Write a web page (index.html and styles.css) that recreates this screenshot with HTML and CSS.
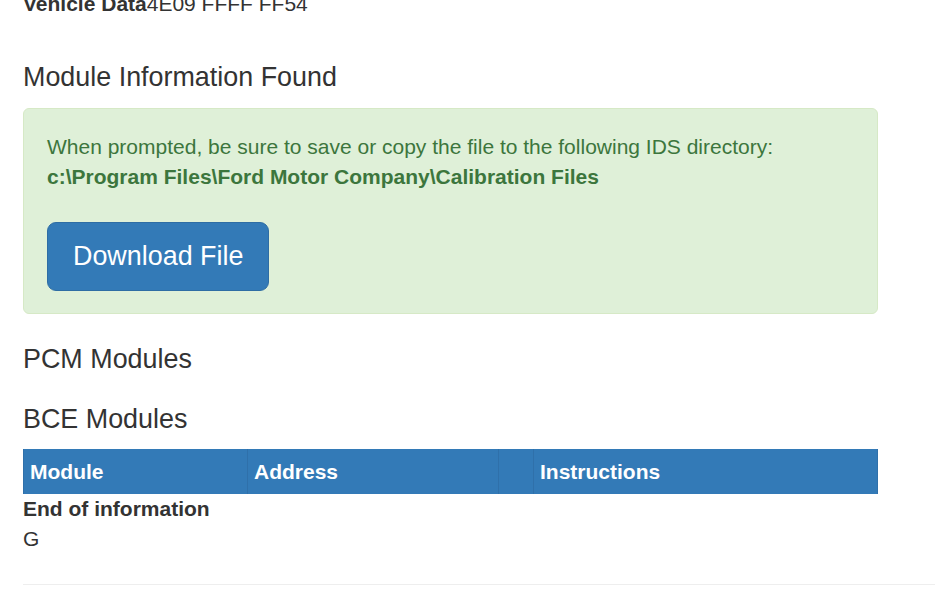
FILE: index.html
```html
<!DOCTYPE html>
<html lang="en">
<head>
<meta charset="utf-8">
<title>Module Information</title>
<link rel="stylesheet" href="styles.css">
</head>
<body>
<div class="page">
  <p class="vehicle"><b>Vehicle Data</b>4E09 FFFF FF54</p>

  <h4 class="section-title first">Module Information Found</h4>

  <div class="alert">
    <p class="alert-text">When prompted, be sure to save or copy the file to the following IDS directory:<br><b>c:\Program Files\Ford Motor Company\Calibration Files</b></p>
    <a class="btn-download" href="#">Download File</a>
  </div>

  <h4 class="section-title">PCM Modules</h4>
  <h4 class="section-title">BCE Modules</h4>

  <table class="modules">
    <thead>
      <tr>
        <th class="col-module">Module</th>
        <th class="col-address">Address</th>
        <th class="col-blank"></th>
        <th class="col-instructions">Instructions</th>
      </tr>
    </thead>
  </table>

  <p class="end-note"><b>End of information</b><br>G</p>
</div>
<hr class="divider">
</body>
</html>
```

FILE: styles.css
```css
html, body {
  margin: 0;
  padding: 0;
  background: #fff;
}

body {
  font-family: "Liberation Sans", Arial, Helvetica, sans-serif;
  font-size: 21px;
  line-height: 30px;
  color: #333;
}

.page {
  width: 855px;
  padding-left: 23px;
  margin-top: -11px;
}

.vehicle {
  margin: 0;
}

.vehicle b {
  font-weight: bold;
}

.section-title {
  font-size: 26.9px;
  font-weight: normal;
  line-height: 30px;
  margin: 30px 0 0;
}

.section-title.first {
  margin-top: 42.7px;
}

.alert {
  margin-top: 16.3px;
  background: #dff0d8;
  border: 1px solid #d6e9c6;
  border-radius: 6px;
  padding: 23px 23px 22px;
  color: #3c763d;
}

.alert-text {
  margin: 0 0 30px;
}

.btn-download {
  display: inline-block;
  background: #337ab7;
  border: 1px solid #2e6da4;
  border-radius: 9px;
  color: #fff;
  text-decoration: none;
  font-size: 26.9px;
  line-height: 37px;
  padding: 15px 25px;
  vertical-align: top;
}

.modules {
  width: 855px;
  margin-top: 15px;
  border-collapse: collapse;
  table-layout: fixed;
  background: #337ab7;
}

.modules th {
  box-sizing: border-box;
  color: #fff;
  font-weight: bold;
  text-align: left;
  padding: 8px 6px 7px;
  line-height: 30px;
  border: 1px solid #2f70aa;
  border-top: 0;
  border-bottom: 0;
}

.modules th.col-module {
  width: 224px;
}

.modules th.col-address {
  width: 251px;
}

.modules th.col-blank {
  width: 35px;
}

.end-note {
  margin: 0;
}

.divider {
  margin: 30px 0 0 23px;
  border: 0;
  border-top: 1px solid #eee;
  height: 0;
}
```
